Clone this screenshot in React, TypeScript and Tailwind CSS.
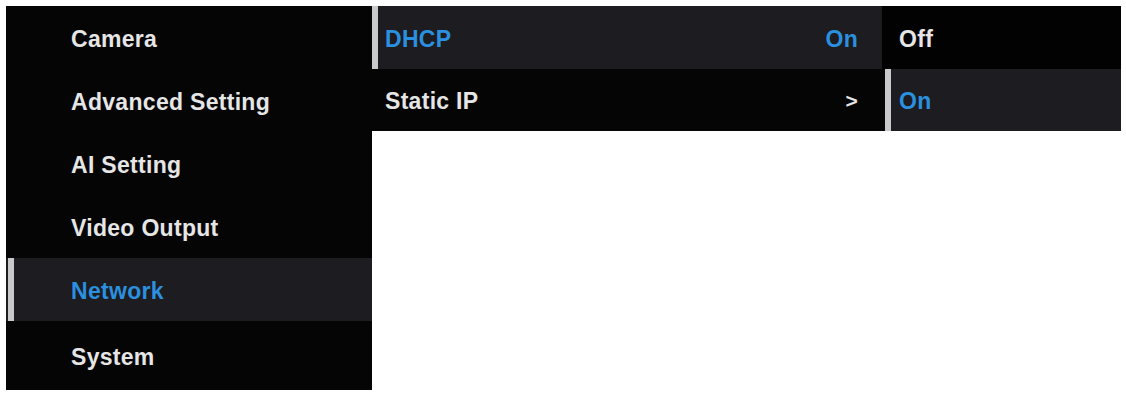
const font = { fontFamily: '"Liberation Sans", Arial, sans-serif' };

const mainItems = ["Camera", "Advanced Setting", "AI Setting", "Video Output", "Network", "System"];

function Bar() {
  return <div className="w-[6px] self-stretch bg-[#c9c9cb]" />;
}

export default function App() {
  return (
    <div className="w-[1126px] h-[393px] bg-white overflow-hidden" style={font}>
      <div className="flex items-start pt-[6px] pl-[6px] font-bold text-[23px] tracking-[0.3px]">
        {/* main menu */}
        <div className="w-[366px] flex flex-col bg-[#050505]">
          {mainItems.map((item, i) => {
            const active = item === "Network";
            const last = i === mainItems.length - 1;
            return (
              <div
                key={item}
                className={`flex items-stretch ${last ? "h-[69px]" : "h-[63px]"} ${active ? "bg-[#1d1c20]" : ""}`}
              >
                <div className="w-[2px]" />
                {active ? <Bar /> : <div className="w-[6px]" />}
                <div className={`flex items-center pl-[57px] pt-[4px] ${active ? "text-[#2a90df]" : "text-[#e6e6e6]"}`}>
                  {item}
                </div>
              </div>
            );
          })}
        </div>

        {/* network submenu */}
        <div className="w-[510px] flex flex-col">
          <div className="h-[63px] flex items-stretch bg-[#1d1c20]">
            <Bar />
            <div className="flex-1 flex items-center justify-between pl-[7px] pr-[24px] pt-[4px] text-[#2a90df]">
              <span>DHCP</span>
              <span>On</span>
            </div>
          </div>
          <div className="h-[62px] flex items-center justify-between pl-[13px] pr-[24px] pt-[2px] bg-[#050505] text-[#e6e6e6]">
            <span>Static IP</span>
            <span className="text-[21px]">&gt;</span>
          </div>
        </div>

        {/* DHCP options */}
        <div className="w-[239px] flex flex-col">
          <div className="h-[63px] flex items-center pl-[17px] pt-[4px] bg-[#020202] text-[#e6e6e6]">Off</div>
          <div className="h-[62px] flex items-stretch bg-[#1d1c20]">
            <div className="w-[3px] bg-[#050505]" />
            <Bar />
            <div className="flex items-center pl-[8px] pt-[2px] text-[#2a90df]">On</div>
          </div>
        </div>
      </div>
    </div>
  );
}
